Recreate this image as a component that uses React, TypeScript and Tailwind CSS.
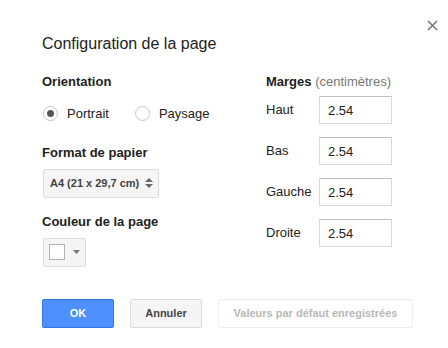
import React from "react"

const margins = ["Haut", "Bas", "Gauche", "Droite"]

function Radio({ checked, label }: { checked?: boolean; label: string }) {
  return (
    <label className="flex items-center gap-[9px]">
      <span className="w-[15px] h-[15px] rounded-full border border-[#c6c6c6] bg-white flex items-center justify-center">
        {checked && <span className="w-[7px] h-[7px] rounded-full bg-[#555]" />}
      </span>
      <span>{label}</span>
    </label>
  )
}

export default function App() {
  return (
    <div
      className="relative w-[448px] h-[348px] bg-white text-[13px] text-[#222] overflow-hidden"
      style={{ fontFamily: '"Liberation Sans", Arial, sans-serif' }}
    >
      {/* Close */}
      <button className="absolute top-[20px] left-[427px] w-[11px] h-[11px]">
        <svg viewBox="0 0 11 11" className="w-[11px] h-[11px]">
          <path d="M1 1L10 10M10 1L1 10" stroke="#777" strokeWidth="1.6" />
        </svg>
      </button>

      <div className="pl-[42px] pt-[34px]">
        <h1 className="text-[16px] leading-[20px] text-[#222]">Configuration de la page</h1>

        <div className="flex mt-[20px]">
          {/* Left column */}
          <div className="w-[224px]">
            <div className="font-bold leading-[16px]">Orientation</div>
            <div className="flex gap-[26px] mt-[14px] ml-[1px]">
              <Radio checked label="Portrait" />
              <Radio label="Paysage" />
            </div>

            <div className="font-bold leading-[16px] mt-[21px]">Format de papier</div>
            <div className="mt-[8px] ml-[1px] w-[116px] h-[29px] border border-[#dcdcdc] rounded-[2px] bg-[#f5f5f5] flex items-center pl-[6px] gap-[6px] text-[11px] font-bold text-[#444]">
              <span>A4 (21 x 29,7 cm)</span>
              <svg viewBox="0 0 8 12" className="w-[8px] h-[12px]">
                <path d="M0 5L4 1L8 5Z M0 7L4 11L8 7Z" fill="#666" />
              </svg>
            </div>

            <div className="font-bold leading-[16px] mt-[16px]">Couleur de la page</div>
            <div className="mt-[8px] ml-[1px] w-[43px] h-[29px] border border-[#dcdcdc] rounded-[2px] bg-[#f5f5f5] flex items-center pl-[5px] gap-[8px]">
              <span className="w-[16px] h-[16px] border border-[#b3b3b3] bg-white" />
              <svg viewBox="0 0 7 4" className="w-[7px] h-[4px]">
                <path d="M0 0L7 0L3.5 4Z" fill="#777" />
              </svg>
            </div>
          </div>

          {/* Right column */}
          <div>
            <div className="leading-[16px]">
              <span className="font-bold">Marges</span>{" "}
              <span className="text-[#777]">(centimètres)</span>
            </div>
            <div className="flex flex-col gap-[13px] mt-[6px]">
              {margins.map((m) => (
                <div key={m} className="flex items-center h-[28px]">
                  <span className="w-[53px]">{m}</span>
                  <input
                    defaultValue="2.54"
                    className="w-[73px] h-[28px] border border-[#d9d9d9] border-t-[#c0c0c0] px-[8px] text-[13px] text-[#222] outline-none"
                  />
                </div>
              ))}
            </div>
          </div>
        </div>

        <div className="flex gap-[16px] mt-[32px] text-[11px] font-bold">
          <button className="w-[72px] h-[29px] rounded-[2px] border border-[#3079ed] bg-[#4d90fe] text-white">OK</button>
          <button className="w-[72px] h-[29px] rounded-[2px] border border-[#dcdcdc] bg-[#f5f5f5] text-[#444]">Annuler</button>
          <button className="w-[195px] h-[29px] rounded-[2px] border border-[#eeeeee] bg-white text-[#b8b8b8]">Valeurs par défaut enregistrées</button>
        </div>
      </div>
    </div>
  )
}
